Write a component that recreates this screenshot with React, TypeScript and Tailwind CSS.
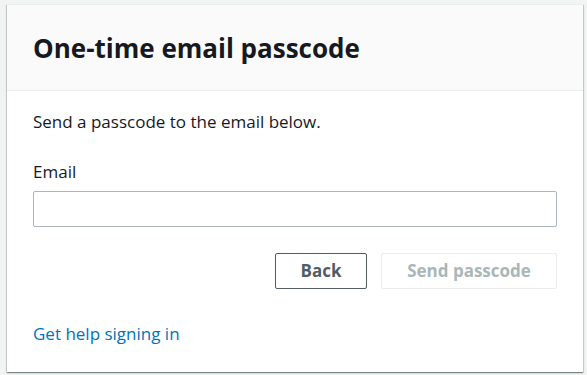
import React, { useState } from 'react';

export default function App() {
  const [email, setEmail] = useState('');

  return (
    <div className="min-h-screen w-full bg-[#f2f3f3] pt-[4px] pl-[7px] pr-[4px] pb-[3px]" style={{ fontFamily: '"Open Sans", "Liberation Sans", Arial, sans-serif' }}>
      <div className="w-[576px] h-[368px] bg-white flex flex-col border-t border-[#eaeded] shadow-[0_1px_1px_0_rgba(0,28,36,0.3),1px_1px_1px_0_rgba(0,28,36,0.15),-1px_1px_1px_0_rgba(0,28,36,0.15)]">
        <div className="h-[86px] bg-[#fafafa] border-b border-[#eaeded] px-[26px] flex items-center">
          <h1 className="text-[26px] font-bold text-[#16191f] leading-none">One-time email passcode</h1>
        </div>

        <div className="px-[26px] pt-[20px] flex flex-col">
          <p className="text-[17px] text-[#16191f] leading-[22px]">Send a passcode to the email below.</p>

          <label className="mt-[28px] text-[17px] text-[#16191f] leading-[22px]">Email</label>
          <input
            type="email"
            value={email}
            onChange={(e) => setEmail(e.target.value)}
            className="mt-[8px] h-[36px] w-full rounded-[2px] border border-[#aab7b8] bg-white px-3 text-[16px] outline-none"
          />

          <div className="mt-[26px] flex justify-end gap-[14px]">
            <button className="h-[36px] w-[92px] rounded-[2px] border border-[#545b64] bg-white text-[17px] font-bold text-[#545b64]">
              Back
            </button>
            <button disabled className="h-[36px] w-[176px] rounded-[2px] border border-[#eaeded] bg-white text-[17px] font-bold text-[#aab7b8]">
              Send passcode
            </button>
          </div>

          <a href="#" className="mt-[34px] text-[17px] text-[#0073bb] leading-[22px] self-start">
            Get help signing in
          </a>
        </div>
      </div>
    </div>
  );
}
